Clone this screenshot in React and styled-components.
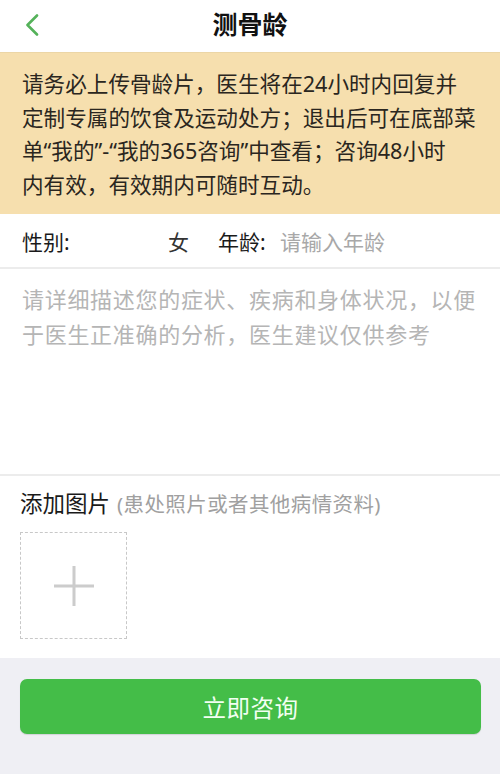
import React from "react";
import styled, { createGlobalStyle } from "styled-components";

const Global = createGlobalStyle`
  html, body { margin: 0; padding: 0; background: #efeff4; }
  body { font-family: "Noto Sans", "Noto Sans CJK SC", sans-serif; }
  * { box-sizing: border-box; }
`;

const Page = styled.div`
  width: 500px;
  min-height: 774px;
  display: flex;
  flex-direction: column;
  background: #efeff4;
`;

const Header = styled.header`
  height: 52px;
  background: #fff;
  display: flex;
  align-items: center;
  justify-content: center;
  position: relative;
`;

const Back = styled.button`
  position: absolute;
  left: 18px;
  top: 9px;
  width: 28px;
  height: 32px;
  border: 0;
  padding: 0;
  background: transparent;
  display: flex;
  align-items: center;
  justify-content: center;
`;

const Title = styled.h1`
  margin: 0 0 3px;
  font-size: 25px;
  font-weight: 700;
  color: #111;
  line-height: 1;
`;

const Notice = styled.div`
  background: #f6dfae;
  border-top: 1px solid #ecd6a6;
  padding: 14px 8px 13px 22px;
  font-size: 21.6px;
  line-height: 33.6px;
  color: #2a2620;
  white-space: nowrap;
`;

const Section = styled.div`
  background: #fff;
`;

const Row = styled.div`
  height: 55px;
  display: flex;
  align-items: center;
  padding: 0 22px;
  border-bottom: 2px solid #ececec;
  font-size: 21px;
  color: #1a1a1a;
`;

const Label = styled.span`
  width: ${(p) => p.$w || "auto"};
  color: #1a1a1a;
`;

const Value = styled.span`
  width: ${(p) => p.$w || "auto"};
  color: ${(p) => (p.$muted ? "#a8a8a8" : "#333")};
`;

const Describe = styled.div`
  height: 207px;
  padding: 13px 8px 0 22px;
  font-size: 22px;
  letter-spacing: 0.7px;
  line-height: 35px;
  color: #b5b5b5;
  border-bottom: 2px solid #ececec;
  white-space: nowrap;
`;

const Upload = styled.div`
  padding: 13px 20px 19px 20px;
`;

const UploadTitle = styled.div`
  font-size: 22.5px;
  color: #1a1a1a;
  line-height: 30px;
  display: flex;
  align-items: baseline;
  gap: 7px;
`;

const Hint = styled.span`
  font-size: 20.5px;
  letter-spacing: 0.4px;
  color: #a0a0a0;
`;

const AddBox = styled.div`
  margin-top: 13px;
  width: 107px;
  height: 107px;
  border: 1px dashed #c8c8c8;
  display: flex;
  align-items: center;
  justify-content: center;
`;

const Footer = styled.div`
  padding: 21px 19px 0 20px;
`;

const Button = styled.button`
  width: 100%;
  height: 55px;
  border: 0;
  border-radius: 7px;
  background: #44bd48;
  color: #f2fff2;
  font-family: "Noto Sans CJK SC", sans-serif;
  font-size: 23.5px;
  letter-spacing: 0.5px;
  box-shadow: 0 1px 1px rgba(0,0,0,0.12);
`;

const noticeLines = [
  "请务必上传骨龄片，医生将在24小时内回复并",
  "定制专属的饮食及运动处方；退出后可在底部菜",
  "单“我的”-“我的365咨询”中查看；咨询48小时",
  "内有效，有效期内可随时互动。",
];

const describeLines = [
  "请详细描述您的症状、疾病和身体状况，以便",
  "于医生正准确的分析，医生建议仅供参考",
];

export default function App() {
  return (
    <Page>
      <Global />
      <Header>
        <Back aria-label="back">
          <svg width="14" height="22" viewBox="0 0 14 22">
            <path d="M12 1.5 L2.5 11 L12 20.5" fill="none" stroke="#55b25a" strokeWidth="2.6" strokeLinecap="round" strokeLinejoin="round" />
          </svg>
        </Back>
        <Title>测骨龄</Title>
      </Header>
      <Notice>
        {noticeLines.map((l, i) => (
          <React.Fragment key={i}>
            {l}
            {i < noticeLines.length - 1 && <br />}
          </React.Fragment>
        ))}
      </Notice>
      <Section>
        <Row>
          <Label $w="146px">性别:</Label>
          <Value $w="50px">女</Value>
          <Label $w="62px">年龄:</Label>
          <Value $muted>请输入年龄</Value>
        </Row>
        <Describe>
          {describeLines.map((l, i) => (
            <React.Fragment key={i}>
              {l}
              {i < describeLines.length - 1 && <br />}
            </React.Fragment>
          ))}
        </Describe>
        <Upload>
          <UploadTitle>
            添加图片<Hint>(患处照片或者其他病情资料)</Hint>
          </UploadTitle>
          <AddBox>
            <svg width="42" height="42" viewBox="0 0 42 42">
              <path d="M21 1 V41 M1 21 H41" stroke="#cccccc" strokeWidth="3" />
            </svg>
          </AddBox>
        </Upload>
      </Section>
      <Footer>
        <Button>立即咨询</Button>
      </Footer>
    </Page>
  );
}
